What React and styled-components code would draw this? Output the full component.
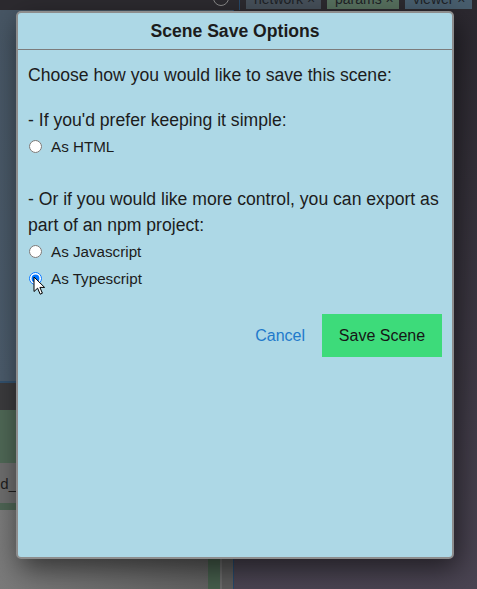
import styled, { createGlobalStyle } from 'styled-components';
import { useState } from 'react';

const GlobalStyle = createGlobalStyle`
  html, body {
    margin: 0;
    padding: 0;
    width: 477px;
    height: 589px;
    overflow: hidden;
    font-family: "Liberation Sans", Arial, sans-serif;
  }
  * {
    box-sizing: border-box;
  }
`;

const Screen = styled.div`
  position: relative;
  width: 477px;
  height: 589px;
  display: flex;
  flex-direction: column;
  background: #36323b;
  overflow: hidden;
`;

const TopBar = styled.div`
  height: 10px;
  flex-shrink: 0;
  display: flex;
  align-items: flex-start;
  padding-left: 213px;
  gap: 6px;
  background: #2c2a2f;
`;

const TopIcon = styled.div`
  width: 16px;
  height: 16px;
  margin-top: -10px;
  margin-right: 4px;
  border-radius: 50%;
  border: 1px solid #8a8a8a;
`;

const Divider = styled.div`
  width: 1px;
  height: 10px;
  background: #27496a;
`;

const Tab = styled.div`
  width: ${(props) => props.w}px;
  height: 9px;
  padding: 0 8px 3px 8px;
  display: flex;
  align-items: flex-end;
  overflow: hidden;
  font-size: 14px;
  line-height: 14px;
  white-space: nowrap;
  color: #1e2226;
  background: ${(props) => props.bg};
`;

const Main = styled.div`
  flex-grow: 1;
  display: flex;
`;

const LeftPane = styled.div`
  width: 233px;
  display: flex;
  flex-direction: column;
`;

const Viewport = styled.div`
  height: 373px;
  background: linear-gradient(to bottom, #475664, #4b5b6b);
  border-bottom: 2px solid #32506c;
`;

const ToolBand = styled.div`
  height: 27px;
  background: #3b3b3d;
`;

const GreenPanel = styled.div`
  height: 53px;
  background: #4f6856;
`;

const InputRow = styled.div`
  height: 40px;
  display: flex;
  align-items: center;
  background: #6d6d6d;
  font-size: 15px;
  color: #1e1e1e;
  text-indent: -3px;
  overflow: hidden;
`;

const GreenStrip = styled.div`
  height: 7px;
  background: #4e6454;
`;

const BottomArea = styled.div`
  flex-grow: 1;
  display: flex;
  justify-content: flex-end;
  background: linear-gradient(to right, #7a7a7a, #5e5e5e);
`;

const Column = styled.div`
  width: ${(props) => props.w}px;
  background: ${(props) => props.bg};
`;

const RightPane = styled.div`
  flex-grow: 1;
  border-left: 1px solid #27496a;
  background: linear-gradient(to bottom, #2c2930, #4a4452);
`;

const Dialog = styled.div`
  position: absolute;
  left: 16px;
  top: 11px;
  width: 438px;
  height: 548px;
  display: flex;
  flex-direction: column;
  background: #add8e6;
  border: 2px solid #8d8d8d;
  border-radius: 5px;
  box-shadow: 4px 10px 28px rgba(0, 0, 0, 0.55);
  color: #1c1c1c;
`;

const Header = styled.div`
  height: 37px;
  flex-shrink: 0;
  display: flex;
  align-items: center;
  justify-content: center;
  border-bottom: 1px solid #7c7c7c;
  font-size: 17.6px;
  font-weight: bold;
`;

const Body = styled.div`
  padding: 12px 10px 0 10px;
  display: flex;
  flex-direction: column;
`;

const Text = styled.p`
  margin: ${(props) => props.top || 0}px 0 0 0;
  font-size: 17.6px;
  line-height: 26px;
`;

const Option = styled.label`
  height: 22px;
  margin-top: ${(props) => props.top || 0}px;
  display: flex;
  align-items: center;
  font-size: 15.2px;
  cursor: pointer;
`;

const Radio = styled.input`
  width: 13px;
  height: 13px;
  margin: 0 9px 0 1px;
`;

const Actions = styled.div`
  margin-top: 25px;
  display: flex;
  justify-content: flex-end;
  align-items: center;
  gap: 17px;
`;

const CancelButton = styled.button`
  border: none;
  background: none;
  padding: 0;
  font-family: "Liberation Sans", Arial, sans-serif;
  font-size: 16px;
  color: #1f7acb;
  cursor: pointer;
`;

const SaveButton = styled.button`
  width: 120px;
  height: 43px;
  border: none;
  background: #3ddb7a;
  font-family: "Liberation Sans", Arial, sans-serif;
  font-size: 16px;
  color: #161616;
  cursor: pointer;
`;

const Cursor = styled.svg`
  position: absolute;
  left: 33px;
  top: 276px;
  width: 13px;
  height: 20px;
  pointer-events: none;
`;

function App() {
  const [format, setFormat] = useState('ts');

  return (
    <>
      <GlobalStyle />
      <Screen>
        <TopBar>
          <TopIcon />
          <Divider />
          <Tab w={75} bg="#46505a">network ×</Tab>
          <Tab w={72} bg="#57705e">params ×</Tab>
          <Tab w={67} bg="#485e6e">viewer ×</Tab>
        </TopBar>
        <Main>
          <LeftPane>
            <Viewport />
            <ToolBand />
            <GreenPanel />
            <InputRow>id_</InputRow>
            <GreenStrip />
            <BottomArea>
              <Column w={12} bg="#465e4c" />
              <Column w={2} bg="#6a6a6a" />
              <Column w={11} bg="#5a5a5a" />
            </BottomArea>
          </LeftPane>
          <RightPane />
        </Main>

        <Dialog>
          <Header>Scene Save Options</Header>
          <Body>
            <Text>Choose how you would like to save this scene:</Text>
            <Text top={19}>- If you'd prefer keeping it simple:</Text>
            <Option top={2}>
              <Radio
                type="radio"
                name="format"
                checked={format === 'html'}
                onChange={() => setFormat('html')}
              />
              As HTML
            </Option>
            <Text top={29}>
              - Or if you would like more control, you can export as part of an
              npm project:
            </Text>
            <Option top={2}>
              <Radio
                type="radio"
                name="format"
                checked={format === 'js'}
                onChange={() => setFormat('js')}
              />
              As Javascript
            </Option>
            <Option top={5}>
              <Radio
                type="radio"
                name="format"
                checked={format === 'ts'}
                onChange={() => setFormat('ts')}
              />
              As Typescript
            </Option>
            <Actions>
              <CancelButton>Cancel</CancelButton>
              <SaveButton>Save Scene</SaveButton>
            </Actions>
          </Body>
        </Dialog>

        <Cursor viewBox="0 0 13 20">
          <path
            d="M1 1 L1 15.5 L4.6 12.2 L7.2 18.2 L9.4 17.2 L6.9 11.4 L11.6 11.4 Z"
            fill="#fff"
            stroke="#000"
            strokeWidth="1"
            strokeLinejoin="round"
          />
        </Cursor>
      </Screen>
    </>
  );
}

export default App;
